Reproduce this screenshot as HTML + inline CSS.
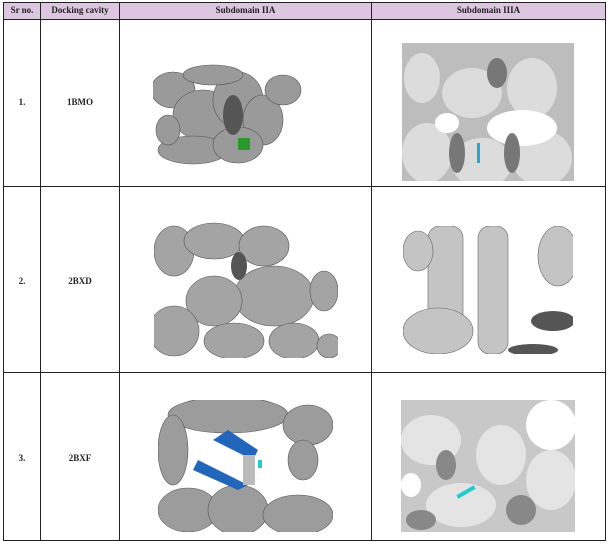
<!DOCTYPE html>
<html><head><meta charset="utf-8"><style>
body{margin:0;background:#fff;width:608px;height:546px;position:relative;overflow:hidden;font-family:"Liberation Serif",serif;}
.l{position:absolute;background:#222;}
.t{position:absolute;font-size:9px;font-weight:bold;color:#222;text-align:center;}
svg{position:absolute;}
</style></head><body>
<div style="position:absolute;left:3px;top:2px;width:602px;height:17px;background:#dcc6e0"></div>
<!-- horizontal lines -->
<div class="l" style="left:3px;top:2px;width:603px;height:1px"></div>
<div class="l" style="left:3px;top:19px;width:603px;height:1px"></div>
<div class="l" style="left:3px;top:186px;width:603px;height:1px"></div>
<div class="l" style="left:3px;top:372px;width:603px;height:1px"></div>
<div class="l" style="left:3px;top:540px;width:603px;height:1px"></div>
<!-- vertical lines -->
<div class="l" style="left:3px;top:2px;width:1px;height:539px"></div>
<div class="l" style="left:40px;top:2px;width:1px;height:539px"></div>
<div class="l" style="left:119px;top:2px;width:1px;height:539px"></div>
<div class="l" style="left:371px;top:2px;width:1px;height:539px"></div>
<div class="l" style="left:605px;top:2px;width:1px;height:539px"></div>
<div class="t" style="left:4px;top:5px;width:36px">Sr no.</div>
<div class="t" style="left:41px;top:5px;width:78px">Docking cavity</div>
<div class="t" style="left:120px;top:5px;width:251px">Subdomain IIA</div>
<div class="t" style="left:372px;top:5px;width:233px">Subdomain IIIA</div>
<div class="t" style="left:4px;top:97px;width:36px">1.</div>
<div class="t" style="left:41px;top:97px;width:78px">1BMO</div>
<div class="t" style="left:4px;top:276px;width:36px">2.</div>
<div class="t" style="left:41px;top:276px;width:78px">2BXD</div>
<div class="t" style="left:4px;top:453px;width:36px">3.</div>
<div class="t" style="left:41px;top:453px;width:78px">2BXF</div>

<!-- Row1 left -->
<svg style="left:153px;top:60px" width="167" height="105">
<rect width="167" height="105" fill="#fff"/>
<g fill="#9a9a9a" stroke="#555" stroke-width="0.6">
<ellipse cx="20" cy="30" rx="22" ry="18"/><ellipse cx="50" cy="55" rx="30" ry="25"/><ellipse cx="85" cy="40" rx="25" ry="28"/>
<ellipse cx="110" cy="60" rx="20" ry="25"/><ellipse cx="40" cy="90" rx="35" ry="14"/><ellipse cx="85" cy="85" rx="25" ry="18"/>
<ellipse cx="130" cy="30" rx="18" ry="15"/><ellipse cx="60" cy="15" rx="30" ry="10"/><ellipse cx="15" cy="70" rx="12" ry="15"/></g>
<ellipse cx="80" cy="55" rx="10" ry="20" fill="#555"/>
<rect x="85" y="78" width="12" height="12" fill="#2a9a2a"/>
</svg>
<!-- Row1 right -->
<svg style="left:402px;top:43px" width="172" height="138">
<rect width="172" height="138" fill="#bdbdbd"/>
<g fill="#dcdcdc"><ellipse cx="25" cy="110" rx="25" ry="30"/><ellipse cx="80" cy="120" rx="30" ry="25"/><ellipse cx="140" cy="115" rx="30" ry="28"/>
<ellipse cx="70" cy="50" rx="30" ry="25"/><ellipse cx="130" cy="45" rx="25" ry="30"/><ellipse cx="20" cy="35" rx="18" ry="25"/></g>
<g fill="#fff"><ellipse cx="120" cy="85" rx="35" ry="18"/><ellipse cx="45" cy="80" rx="12" ry="10"/></g>
<g fill="#777"><ellipse cx="55" cy="110" rx="8" ry="20"/><ellipse cx="110" cy="110" rx="8" ry="20"/><ellipse cx="95" cy="30" rx="10" ry="15"/></g>
<rect x="75" y="100" width="3" height="20" fill="#2ac"/>
</svg>
<!-- Row2 left -->
<svg style="left:154px;top:221px" width="184" height="137">
<rect width="184" height="137" fill="#fff"/>
<g fill="#a4a4a4" stroke="#555" stroke-width="0.6">
<ellipse cx="20" cy="30" rx="20" ry="25"/><ellipse cx="60" cy="20" rx="30" ry="18"/><ellipse cx="110" cy="25" rx="25" ry="20"/>
<ellipse cx="120" cy="75" rx="40" ry="30"/><ellipse cx="60" cy="80" rx="28" ry="25"/><ellipse cx="20" cy="110" rx="25" ry="25"/>
<ellipse cx="80" cy="120" rx="30" ry="18"/><ellipse cx="140" cy="120" rx="25" ry="18"/><ellipse cx="170" cy="70" rx="14" ry="20"/><ellipse cx="175" cy="125" rx="12" ry="12"/></g>
<ellipse cx="85" cy="45" rx="8" ry="14" fill="#555"/>
</svg>
<!-- Row2 right -->
<svg style="left:403px;top:226px" width="170" height="128">
<rect width="170" height="128" fill="#fff"/>
<g fill="#c4c4c4" stroke="#666" stroke-width="0.6">
<rect x="25" y="0" width="35" height="100" rx="12"/><rect x="75" y="0" width="30" height="128" rx="12"/>
<ellipse cx="15" cy="25" rx="15" ry="20"/><ellipse cx="35" cy="105" rx="35" ry="23"/><ellipse cx="155" cy="30" rx="20" ry="30"/></g>
<g fill="#555"><ellipse cx="150" cy="95" rx="22" ry="10"/><ellipse cx="130" cy="124" rx="25" ry="6"/></g>
</svg>
<!-- Row3 left -->
<svg style="left:158px;top:400px" width="175" height="132">
<rect width="175" height="132" fill="#fff"/>
<g fill="#9c9c9c" stroke="#555" stroke-width="0.6">
<ellipse cx="70" cy="15" rx="60" ry="18"/><ellipse cx="150" cy="25" rx="25" ry="20"/><ellipse cx="15" cy="50" rx="15" ry="35"/>
<ellipse cx="30" cy="110" rx="30" ry="22"/><ellipse cx="80" cy="110" rx="30" ry="25"/><ellipse cx="140" cy="115" rx="35" ry="20"/><ellipse cx="145" cy="60" rx="15" ry="20"/></g>
<path d="M55 40 L95 60 L100 50 L70 30Z M40 60 L90 85 L80 90 L35 70Z" fill="#2266bb"/>
<rect x="85" y="55" width="12" height="30" fill="#bbb"/>
<rect x="100" y="60" width="4" height="8" fill="#2cc"/>
</svg>
<!-- Row3 right -->
<svg style="left:401px;top:400px" width="174" height="132">
<rect width="174" height="132" fill="#c8c8c8"/>
<g fill="#e4e4e4"><ellipse cx="30" cy="40" rx="30" ry="25"/><ellipse cx="100" cy="55" rx="25" ry="30"/><ellipse cx="150" cy="80" rx="25" ry="30"/><ellipse cx="60" cy="105" rx="35" ry="22"/></g>
<g fill="#fff"><ellipse cx="150" cy="25" rx="25" ry="25"/><ellipse cx="10" cy="85" rx="10" ry="12"/></g>
<g fill="#888"><ellipse cx="45" cy="65" rx="10" ry="15"/><ellipse cx="120" cy="110" rx="15" ry="15"/><ellipse cx="20" cy="120" rx="15" ry="10"/></g>
<rect x="55" y="90" width="20" height="4" fill="#2cc" transform="rotate(-30 65 92)"/>
</svg>
</body></html>
